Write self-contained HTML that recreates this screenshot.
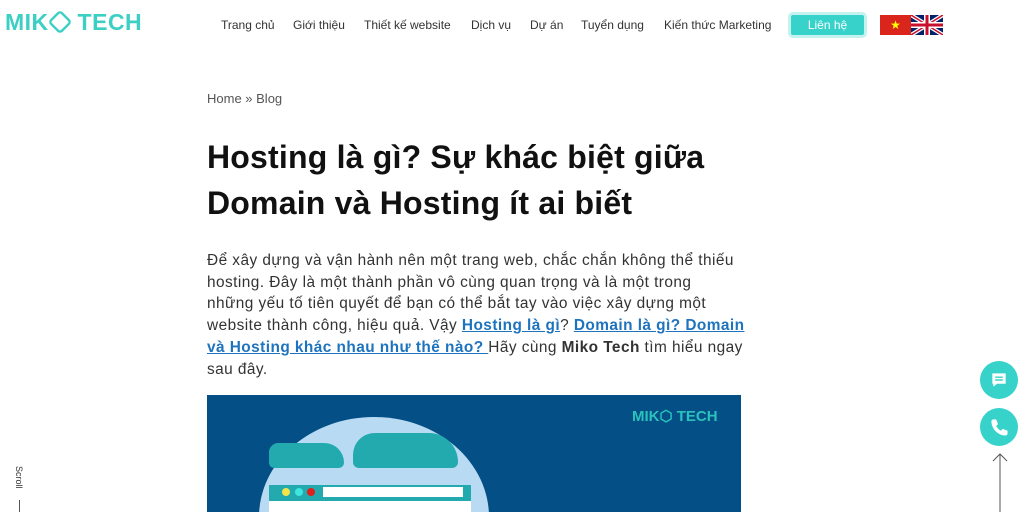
<!DOCTYPE html>
<html><head><meta charset="utf-8"><style>
*{margin:0;padding:0;box-sizing:border-box}
body{width:1024px;height:512px;overflow:hidden;background:#fff;font-family:"Liberation Sans",sans-serif;color:#222;position:relative}
.logo{position:absolute;left:5px;top:9px;font-weight:bold;font-size:23px;letter-spacing:0.5px;color:#3ccfc4}
.nav{position:absolute;top:18px;font-size:12px;color:#333}
.btn{position:absolute;left:788px;top:12px;width:79px;height:26px;background:#37d3cb;border:3px solid #c4f2ef;border-radius:5px;color:#fff;font-size:12px;text-align:center;line-height:20px}
.bc{position:absolute;left:207px;top:91px;font-size:13px;color:#555}
h1{position:absolute;left:207px;top:134px;width:600px;font-size:32px;line-height:46px;font-weight:bold;color:#111;white-space:nowrap;letter-spacing:0.2px}
p{position:absolute;left:207px;top:250px;width:600px;font-size:15.4px;line-height:21.7px;color:#333;letter-spacing:0.45px;white-space:nowrap}
a{color:#1e73be;font-weight:bold;text-decoration:underline}
.img{position:absolute;left:207px;top:395px;width:534px;height:117px;background:#044f86;overflow:hidden}
.circ{position:absolute;width:38px;height:38px;border-radius:50%;background:#37d3cb;left:980px}
</style></head><body>
<div class="logo">MIK<span style="display:inline-block;width:22px;height:22px;border:3px solid #3ccfc4;border-radius:5px;transform:rotate(45deg) scale(.8);vertical-align:-3px"></span> TECH</div>
<div class="nav" style="left:221px">Trang chủ</div>
<div class="nav" style="left:293px">Giới thiệu</div>
<div class="nav" style="left:364px">Thiết kế website</div>
<div class="nav" style="left:471px">Dịch vụ</div>
<div class="nav" style="left:530px">Dự án</div>
<div class="nav" style="left:581px">Tuyển dụng</div>
<div class="nav" style="left:664px">Kiến thức Marketing</div>
<div class="btn">Liên hệ</div>
<div style="position:absolute;left:880px;top:15px;width:31px;height:20px;background:#da251d;color:#ff0;font-size:12px;text-align:center;line-height:20px">★</div>
<svg style="position:absolute;left:911px;top:15px" width="32" height="20" viewBox="0 0 32 20"><rect width="32" height="20" fill="#012169"/><path d="M0 0L32 20M32 0L0 20" stroke="#fff" stroke-width="4"/><path d="M0 0L32 20M32 0L0 20" stroke="#c8102e" stroke-width="1.5"/><path d="M16 0V20M0 10H32" stroke="#fff" stroke-width="6"/><path d="M16 0V20M0 10H32" stroke="#c8102e" stroke-width="3"/></svg>
<div class="bc">Home » Blog</div>
<h1>Hosting là gì? Sự khác biệt giữa<br>Domain và Hosting ít ai biết</h1>
<p>Để xây dựng và vận hành nên một trang web, chắc chắn không thể thiếu<br>hosting. Đây là một thành phần vô cùng quan trọng và là một trong<br>những yếu tố tiên quyết để bạn có thể bắt tay vào việc xây dựng một<br>website thành công, hiệu quả. Vậy <a>Hosting là gì</a>? <a>Domain là gì? Domain</a><br><a>và Hosting khác nhau như thế nào? </a>Hãy cùng <b>Miko Tech</b> tìm hiểu ngay<br>sau đây.</p>
<div class="img">
<div style="position:absolute;left:52px;top:22px;width:230px;height:200px;border-radius:50%;background:#b8dbf3"></div>
<div style="position:absolute;left:62px;top:48px;width:75px;height:25px;border-radius:14px 30px 8px 8px;background:#22aaaf"></div>
<div style="position:absolute;left:146px;top:38px;width:105px;height:35px;border-radius:30px 40px 8px 8px;background:#22aaaf"></div>
<div style="position:absolute;left:62px;top:90px;width:202px;height:40px;background:#fff;border-top:16px solid #22aaaf"></div>
<div style="position:absolute;left:75px;top:93px;width:8px;height:8px;border-radius:50%;background:#f5e34a"></div>
<div style="position:absolute;left:88px;top:93px;width:8px;height:8px;border-radius:50%;background:#3ee6e0"></div>
<div style="position:absolute;left:100px;top:93px;width:8px;height:8px;border-radius:50%;background:#e0201a"></div>
<div style="position:absolute;left:116px;top:92px;width:140px;height:10px;background:#fff"></div>
<div style="position:absolute;left:425px;top:12px;color:#2bc2bd;font-weight:bold;font-size:15px">MIK⬡ TECH</div>
</div>
<div class="circ" style="top:361px"><svg width="38" height="38" viewBox="0 0 40 40"><path d="M13 13h14v11h-9l-4 3v-3h-1z" fill="#fff"/><path d="M16 17h8M16 20h8" stroke="#37d3cb" stroke-width="1.5"/></svg></div>
<div class="circ" style="top:408px"><svg width="38" height="38" viewBox="0 0 40 40"><path d="M14 12l3 0 2 5-2 2c1 2 3 4 5 5l2-2 5 2v3c0 1-1 2-2 2-8 0-15-7-15-15 0-1 1-2 2-2z" fill="#fff"/></svg></div>
<svg style="position:absolute;left:990px;top:452px" width="20" height="60"><path d="M10 2V60M3 9L10 2L17 9" stroke="#555" stroke-width="1" fill="none"/></svg>
<div style="position:absolute;top:466px;left:24px;font-size:9px;color:#333;transform:rotate(90deg);transform-origin:left top">Scroll</div>
<div style="position:absolute;left:19px;top:500px;width:1px;height:12px;background:#555"></div>
</body></html>
